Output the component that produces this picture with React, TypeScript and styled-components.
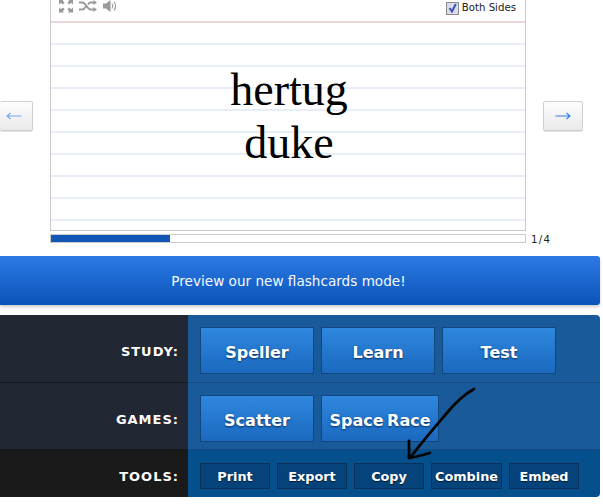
import React from "react";
import styled, { createGlobalStyle } from "styled-components";

const Global = createGlobalStyle`
  html, body { margin: 0; padding: 0; background: #fff; overflow: hidden; }
  body { font-family: "DejaVu Sans", Verdana, sans-serif; }
`;

const Page = styled.div`
  position: relative;
  width: 603px;
  height: 504px;
  overflow: hidden;
`;

const Stage = styled.div`
  display: flex;
  align-items: flex-start;
`;

const NavButton = styled.button<{ $side: "left" | "right" }>`
  box-sizing: border-box;
  width: ${(p) => (p.$side === "left" ? "33px" : "40px")};
  height: 30px;
  margin-top: 101px;
  margin-left: ${(p) => (p.$side === "left" ? "0" : "17px")};
  margin-right: ${(p) => (p.$side === "left" ? "17px" : "0")};
  padding: ${(p) => (p.$side === "left" ? "0 5px 0 0" : "0")};
  display: flex;
  align-items: center;
  justify-content: center;
  border: 1px solid #cfcfcf;
  border-left-width: ${(p) => (p.$side === "left" ? "0" : "1px")};
  border-radius: 2px;
  background: linear-gradient(#fdfdfd, #e9e9e9);
  box-shadow: 0 1px 0 #e4e4e4;
  color: ${(p) => (p.$side === "left" ? "#74a8f0" : "#2f7fe8")};
`;

const CardColumn = styled.div`
  width: 476px;
  position: relative;
`;

const Card = styled.div`
  box-sizing: border-box;
  height: 231px;
  border: 1px solid #cbcbcb;
  border-top: 0;
  display: flex;
  flex-direction: column;
`;

const CardTools = styled.div`
  height: 21px;
  flex: none;
  box-sizing: border-box;
  padding: 0 8px;
  display: flex;
  align-items: flex-start;
  justify-content: space-between;
`;

const IconGroup = styled.div`
  display: flex;
  align-items: center;
  gap: 6px;
  color: #999;
  margin-top: -1px;
`;

const BothSides = styled.label`
  display: flex;
  align-items: center;
  gap: 3px;
  font-size: 10.2px;
  line-height: 14px;
  color: #222;
  margin-right: 1px;
  margin-top: 1px;
`;

const CheckBox = styled.span`
  width: 11px;
  height: 11px;
  border: 1px solid #8a8a8a;
  background: #d8dcec;
  display: flex;
  align-items: center;
  justify-content: center;
`;

const Ruled = styled.div`
  flex: 1;
  border-top: 2px solid #edd6d8;
  background: repeating-linear-gradient(
    to bottom,
    #fff 0,
    #fff 20px,
    #e9edf8 20px,
    #e9edf8 22px
  );
  display: flex;
  flex-direction: column;
  align-items: center;
  padding-top: 40px;
  font-family: "Liberation Serif", "Times New Roman", serif;
  font-size: 46px;
  line-height: 53px;
  color: #000;
`;

const Word = styled.div`
  transform: translateX(1px);
`;

const ProgressRow = styled.div`
  position: relative;
  margin-top: 3px;
  height: 9px;
  border: 1px solid #cbcbcb;
  box-sizing: border-box;
`;

const ProgressFill = styled.div`
  height: 100%;
  background: #1155b5;
`;

const Counter = styled.span`
  position: absolute;
  left: 480px;
  top: -2px;
  font-size: 10.2px;
  line-height: 14px;
  word-spacing: -2px;
  color: #222;
  white-space: nowrap;
`;

const Banner = styled.div`
  margin-top: 13px;
  width: 600px;
  height: 49px;
  box-sizing: border-box;
  padding-right: 23px;
  border-radius: 0 3px 3px 0;
  background: linear-gradient(#2d7ae6, #0a54b8);
  box-shadow: 0 2px 3px rgba(0, 0, 0, 0.2);
  color: #f6f9ff;
  font-size: 13.6px;
  display: flex;
  align-items: center;
  justify-content: center;
`;

const Panel = styled.div`
  margin-top: 10px;
  width: 600px;
  border-radius: 0 4px 4px 0;
  overflow: hidden;
  display: flex;
  flex-direction: column;
`;

const PanelRow = styled.div<{ $h: number }>`
  display: grid;
  grid-template-columns: 188px 1fr;
  height: ${(p) => p.$h}px;
`;

const RowLabel = styled.div<{ $tools?: boolean }>`
  background: ${(p) => (p.$tools ? "#1a1a1a" : "#212733")};
  border-bottom: ${(p) => (p.$tools ? "0" : "1px solid #14181f")};
  color: #fff;
  font-size: 13px;
  font-weight: bold;
  letter-spacing: 1px;
  display: flex;
  align-items: center;
  justify-content: flex-end;
  padding: 6px 9px 0 0;
  box-sizing: border-box;
`;

const RowBody = styled.div<{ $tools?: boolean }>`
  background: ${(p) => (p.$tools ? "#064f8d" : "#195a9a")};
  border-bottom: ${(p) => (p.$tools ? "0" : "1px solid #134a80")};
  display: flex;
  align-items: flex-start;
  gap: 7px;
  padding: ${(p) => (p.$tools ? "13px 0 0 12px" : "12px 0 0 12px")};
  box-sizing: border-box;
`;

const StudyButton = styled.div<{ $w: number }>`
  box-sizing: border-box;
  width: ${(p) => p.$w}px;
  height: 47px;
  padding-top: 3px;
  border: 1px solid #12467f;
  background: linear-gradient(#2f87de, #1a69bf);
  color: #fff;
  font-size: 16px;
  font-weight: bold;
  word-spacing: -2px;
  text-shadow: 0 1px 2px rgba(0, 30, 70, 0.8);
  display: flex;
  align-items: center;
  justify-content: center;
  white-space: nowrap;
`;

const ToolButton = styled.div<{ $w: number }>`
  box-sizing: border-box;
  width: ${(p) => p.$w}px;
  height: 26px;
  border: 1px solid #0c3158;
  background: #06437a;
  color: #fff;
  font-size: 12.8px;
  font-weight: bold;
  text-shadow: 0 1px 1px rgba(0, 0, 0, 0.6);
  display: flex;
  align-items: center;
  justify-content: center;
  white-space: nowrap;
`;

const Scribble = styled.svg`
  position: absolute;
  left: 0;
  top: 0;
  pointer-events: none;
`;

const ArrowGlyph = ({ dir }: { dir: "left" | "right" }) => (
  <svg width="16" height="10" viewBox="0 0 16 10" fill="none" stroke="currentColor" strokeWidth="1.1">
    {dir === "left" ? (
      <path d="M1 5H15.500M4.500 2 1 5l3.500 3" />
    ) : (
      <path d="M.5 5H15M11.500 2 15 5l-3.500 3" />
    )}
  </svg>
);

const ExpandIcon = () => (
  <svg width="14" height="14" viewBox="0 0 15 14" fill="currentColor">
    <path d="M0 0h5.500L4 1.500l2 2L4 5.500l-2-2L.5 5H0zM15 0H9.500L11 1.500l-2 2 2 2 2-2L14.500 5h.5zM0 14h5.500L4 12.500l2-2-2-2-2 2L.5 9H0zM15 14H9.500l1.500-1.500-2-2 2-2 2 2L14.500 9h.5z" />
  </svg>
);

const ShuffleIcon = () => (
  <svg width="18" height="12" viewBox="0 0 18 12" fill="none" stroke="currentColor" strokeWidth="2">
    <path d="M0 2.500h3.500c3 0 5 7 8 7H15M0 9.500h3.500c1.500 0 2.500-1.500 3.500-3M9 4.500c.8-1 1.500-2 2.500-2H15" />
    <path d="M14.500 0 18 2.500 14.500 5zM14.500 7 18 9.500 14.500 12z" fill="currentColor" stroke="none" />
  </svg>
);

const VolumeIcon = () => (
  <svg width="14" height="14" viewBox="0 0 14 14" fill="none" stroke="currentColor">
    <path d="M0 4.500h3L7.500 1v12L3 9.500H0z" fill="currentColor" stroke="none" />
    <path d="M9 4.500c1 1.500 1 3.500 0 5M11 2.500c2 2.500 2 6.500 0 9" strokeWidth="1.100" />
  </svg>
);

const CheckMark = () => (
  <svg width="9" height="10" viewBox="0 0 9 10" fill="none" stroke="#3c55a8" strokeWidth="2">
    <path d="M1.500 5 4 8.500 7.800 1" />
  </svg>
);

const study = [
  { label: "Speller", w: 114 },
  { label: "Learn", w: 114 },
  { label: "Test", w: 114 },
];
const games = [
  { label: "Scatter", w: 114 },
  { label: "Space Race", w: 118 },
];
const tools = [
  { label: "Print", w: 70 },
  { label: "Export", w: 70 },
  { label: "Copy", w: 70 },
  { label: "Combine", w: 71 },
  { label: "Embed", w: 70 },
];

export default function App() {
  return (
    <Page>
      <Global />
      <Stage>
        <NavButton $side="left">
          <ArrowGlyph dir="left" />
        </NavButton>
        <CardColumn>
          <Card>
            <CardTools>
              <IconGroup>
                <ExpandIcon />
                <ShuffleIcon />
                <VolumeIcon />
              </IconGroup>
              <BothSides>
                <CheckBox>
                  <CheckMark />
                </CheckBox>
                Both Sides
              </BothSides>
            </CardTools>
            <Ruled>
              <Word>hertug</Word>
              <Word>duke</Word>
            </Ruled>
          </Card>
          <ProgressRow>
            <ProgressFill style={{ width: `${(119 / 474) * 100}%` }} />
            <Counter>1 / 4</Counter>
          </ProgressRow>
        </CardColumn>
        <NavButton $side="right">
          <ArrowGlyph dir="right" />
        </NavButton>
      </Stage>
      <Banner>Preview our new flashcards mode!</Banner>
      <Panel>
        <PanelRow $h={68}>
          <RowLabel>STUDY:</RowLabel>
          <RowBody>
            {study.map((b) => (
              <StudyButton key={b.label} $w={b.w}>{b.label}</StudyButton>
            ))}
          </RowBody>
        </PanelRow>
        <PanelRow $h={67}>
          <RowLabel>GAMES:</RowLabel>
          <RowBody>
            {games.map((b) => (
              <StudyButton key={b.label} $w={b.w}>{b.label}</StudyButton>
            ))}
          </RowBody>
        </PanelRow>
        <PanelRow $h={47}>
          <RowLabel $tools>TOOLS:</RowLabel>
          <RowBody $tools>
            {tools.map((b) => (
              <ToolButton key={b.label} $w={b.w}>{b.label}</ToolButton>
            ))}
          </RowBody>
        </PanelRow>
      </Panel>
      <Scribble width="603" height="504" viewBox="0 0 603 504" fill="none" stroke="#050505" strokeWidth="2.8" strokeLinecap="round" strokeLinejoin="round">
        <path d="M474 389C463 395 455 403 446 414C434 428 421 443 410 458" />
        <path d="M409 441c0 6 0 12 0 17 7-1 14-3 21-5" />
      </Scribble>
    </Page>
  );
}
